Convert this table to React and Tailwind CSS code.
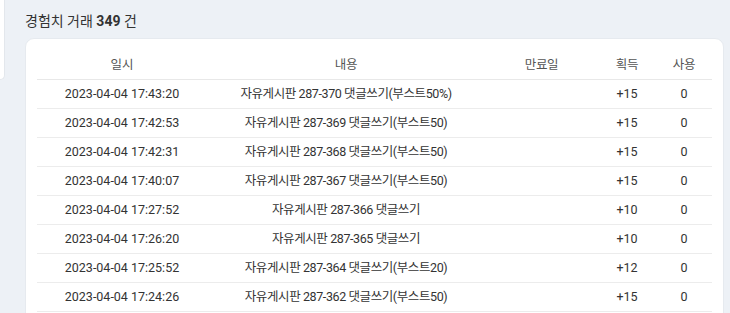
import React from "react";

const rows = [
  ["2023-04-04 17:43:20", "자유게시판 287-370 댓글쓰기(부스트50%)", "", "+15", "0"],
  ["2023-04-04 17:42:53", "자유게시판 287-369 댓글쓰기(부스트50)", "", "+15", "0"],
  ["2023-04-04 17:42:31", "자유게시판 287-368 댓글쓰기(부스트50)", "", "+15", "0"],
  ["2023-04-04 17:40:07", "자유게시판 287-367 댓글쓰기(부스트50)", "", "+15", "0"],
  ["2023-04-04 17:27:52", "자유게시판 287-366 댓글쓰기", "", "+10", "0"],
  ["2023-04-04 17:26:20", "자유게시판 287-365 댓글쓰기", "", "+10", "0"],
  ["2023-04-04 17:25:52", "자유게시판 287-364 댓글쓰기(부스트20)", "", "+12", "0"],
  ["2023-04-04 17:24:26", "자유게시판 287-362 댓글쓰기(부스트50)", "", "+15", "0"],
];

const cols = "grid grid-cols-[170px_278px_113px_58px_56px]";

const App = () => {
  return (
    <div
      className="h-[313px] w-[730px] overflow-hidden bg-[#edf1f6] flex text-[#333]"
      style={{ fontFamily: 'Roboto, "Noto Sans CJK KR", sans-serif' }}
    >
      <div className="w-[5px] h-[80px] shrink-0 bg-white rounded-br-[8px] border-r border-b border-[#e3e7ec]"></div>

      <div className="flex-1 pl-[20px] pr-[6px]">
        <h2 className="h-[38px] pt-[12px] text-[14px] leading-[18px] text-[#333]">
          경험치 거래 <span className="font-bold">349</span> 건
        </h2>

        <div className="bg-white rounded-[9px] border border-[#e6eaef] px-[11px] pt-[12px] h-[300px]">
          <div className={`${cols} h-[29px] items-center text-center text-[12.5px] text-[#555] border-b border-[#e8e8e8]`}>
            <div>일시</div>
            <div className="tracking-[-0.3px]">내용</div>
            <div className="tracking-[-0.3px]">만료일</div>
            <div className="tracking-[-0.3px]">획득</div>
            <div className="tracking-[-0.3px]">사용</div>
          </div>
          {rows.map((r, i) => (
            <div
              key={i}
              className={`${cols} h-[29px] items-center text-center text-[12.5px] text-[#333] border-b border-[#ececec]`}
            >
              <div className="whitespace-nowrap">{r[0]}</div>
              <div className="whitespace-nowrap tracking-[-0.4px]">{r[1]}</div>
              <div className="whitespace-nowrap">{r[2]}</div>
              <div className="whitespace-nowrap">{r[3]}</div>
              <div className="whitespace-nowrap">{r[4]}</div>
            </div>
          ))}
        </div>
      </div>
    </div>
  );
};

export default App;
